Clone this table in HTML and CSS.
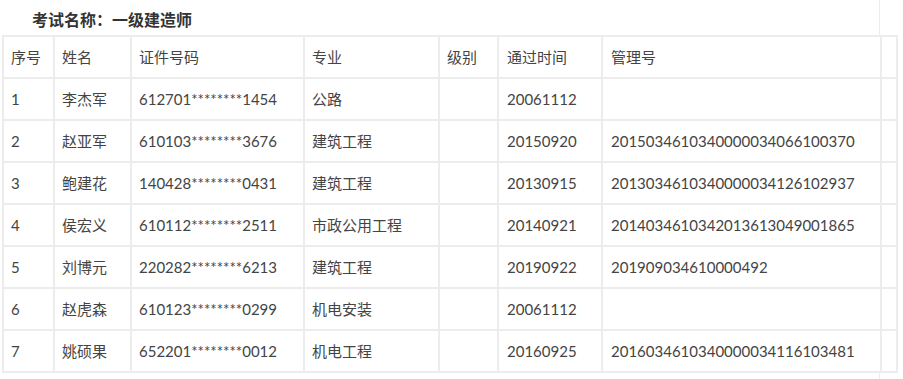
FILE: index.html
```html
<!DOCTYPE html>
<html lang="zh-CN">
<head>
<meta charset="utf-8">
<link rel="stylesheet" href="styles.css">
</head>
<body>
<div class="page">
  <h3 class="title">考试名称：一级建造师</h3>
  <table class="grid">
    <thead>
      <tr>
        <th class="c1">序号</th>
        <th class="c2">姓名</th>
        <th class="c3">证件号码</th>
        <th class="c4">专业</th>
        <th class="c5">级别</th>
        <th class="c6">通过时间</th>
        <th class="c7">管理号</th>
        <th class="c8"></th>
      </tr>
    </thead>
    <tbody>
      <tr><td>1</td><td>李杰军</td><td>612701********1454</td><td>公路</td><td></td><td>20061112</td><td></td><td></td></tr>
      <tr><td>2</td><td>赵亚军</td><td>610103********3676</td><td>建筑工程</td><td></td><td>20150920</td><td>2015034610340000034066100370</td><td></td></tr>
      <tr><td>3</td><td>鲍建花</td><td>140428********0431</td><td>建筑工程</td><td></td><td>20130915</td><td>2013034610340000034126102937</td><td></td></tr>
      <tr><td>4</td><td>侯宏义</td><td>610112********2511</td><td>市政公用工程</td><td></td><td>20140921</td><td>2014034610342013613049001865</td><td></td></tr>
      <tr><td>5</td><td>刘博元</td><td>220282********6213</td><td>建筑工程</td><td></td><td>20190922</td><td>201909034610000492</td><td></td></tr>
      <tr><td>6</td><td>赵虎森</td><td>610123********0299</td><td>机电安装</td><td></td><td>20061112</td><td></td><td></td></tr>
      <tr><td>7</td><td>姚硕果</td><td>652201********0012</td><td>机电工程</td><td></td><td>20160925</td><td>2016034610340000034116103481</td><td></td></tr>
    </tbody>
  </table>
</div>
</body>
</html>
```

FILE: styles.css
```css
html, body {
  margin: 0;
  padding: 0;
  background: #fff;
}

body {
  font-family: "Noto Sans CJK SC", "Noto Sans", sans-serif;
  color: #444;
  font-size: 14px;
}

.page {
  width: 880px;
  height: 379px;
  border-right: 1px solid #ececec;
  box-sizing: border-box;
}

.title {
  margin: 0;
  height: 35px;
  box-sizing: border-box;
  padding: 6px 0 0 32px;
  font-size: 16px;
  line-height: 26px;
  font-weight: bold;
  color: #333;
}

.grid {
  margin-left: 2px;
  border-collapse: separate;
  border-spacing: 2px;
  background: #ececec;
  table-layout: fixed;
  width: 895px;
  font-family: "Lato", "Noto Sans CJK SC", sans-serif;
  font-size: 15px;
}

.grid th,
.grid td {
  background: #fff;
  height: 40px;
  box-sizing: border-box;
  padding: 0 7px;
  text-align: left;
  font-weight: normal;
  white-space: nowrap;
  line-height: 20px;
  vertical-align: middle;
}

.c1 { width: 49px; }
.c2 { width: 75px; }
.c3 { width: 171px; }
.c4 { width: 133px; }
.c5 { width: 57px; }
.c6 { width: 102px; padding-left: 8px !important; }
.c7 { width: 277px; padding-left: 8px !important; }
.c8 { width: 13px; }

.grid td:nth-child(6),
.grid td:nth-child(7) {
  padding-left: 8px;
}
```
